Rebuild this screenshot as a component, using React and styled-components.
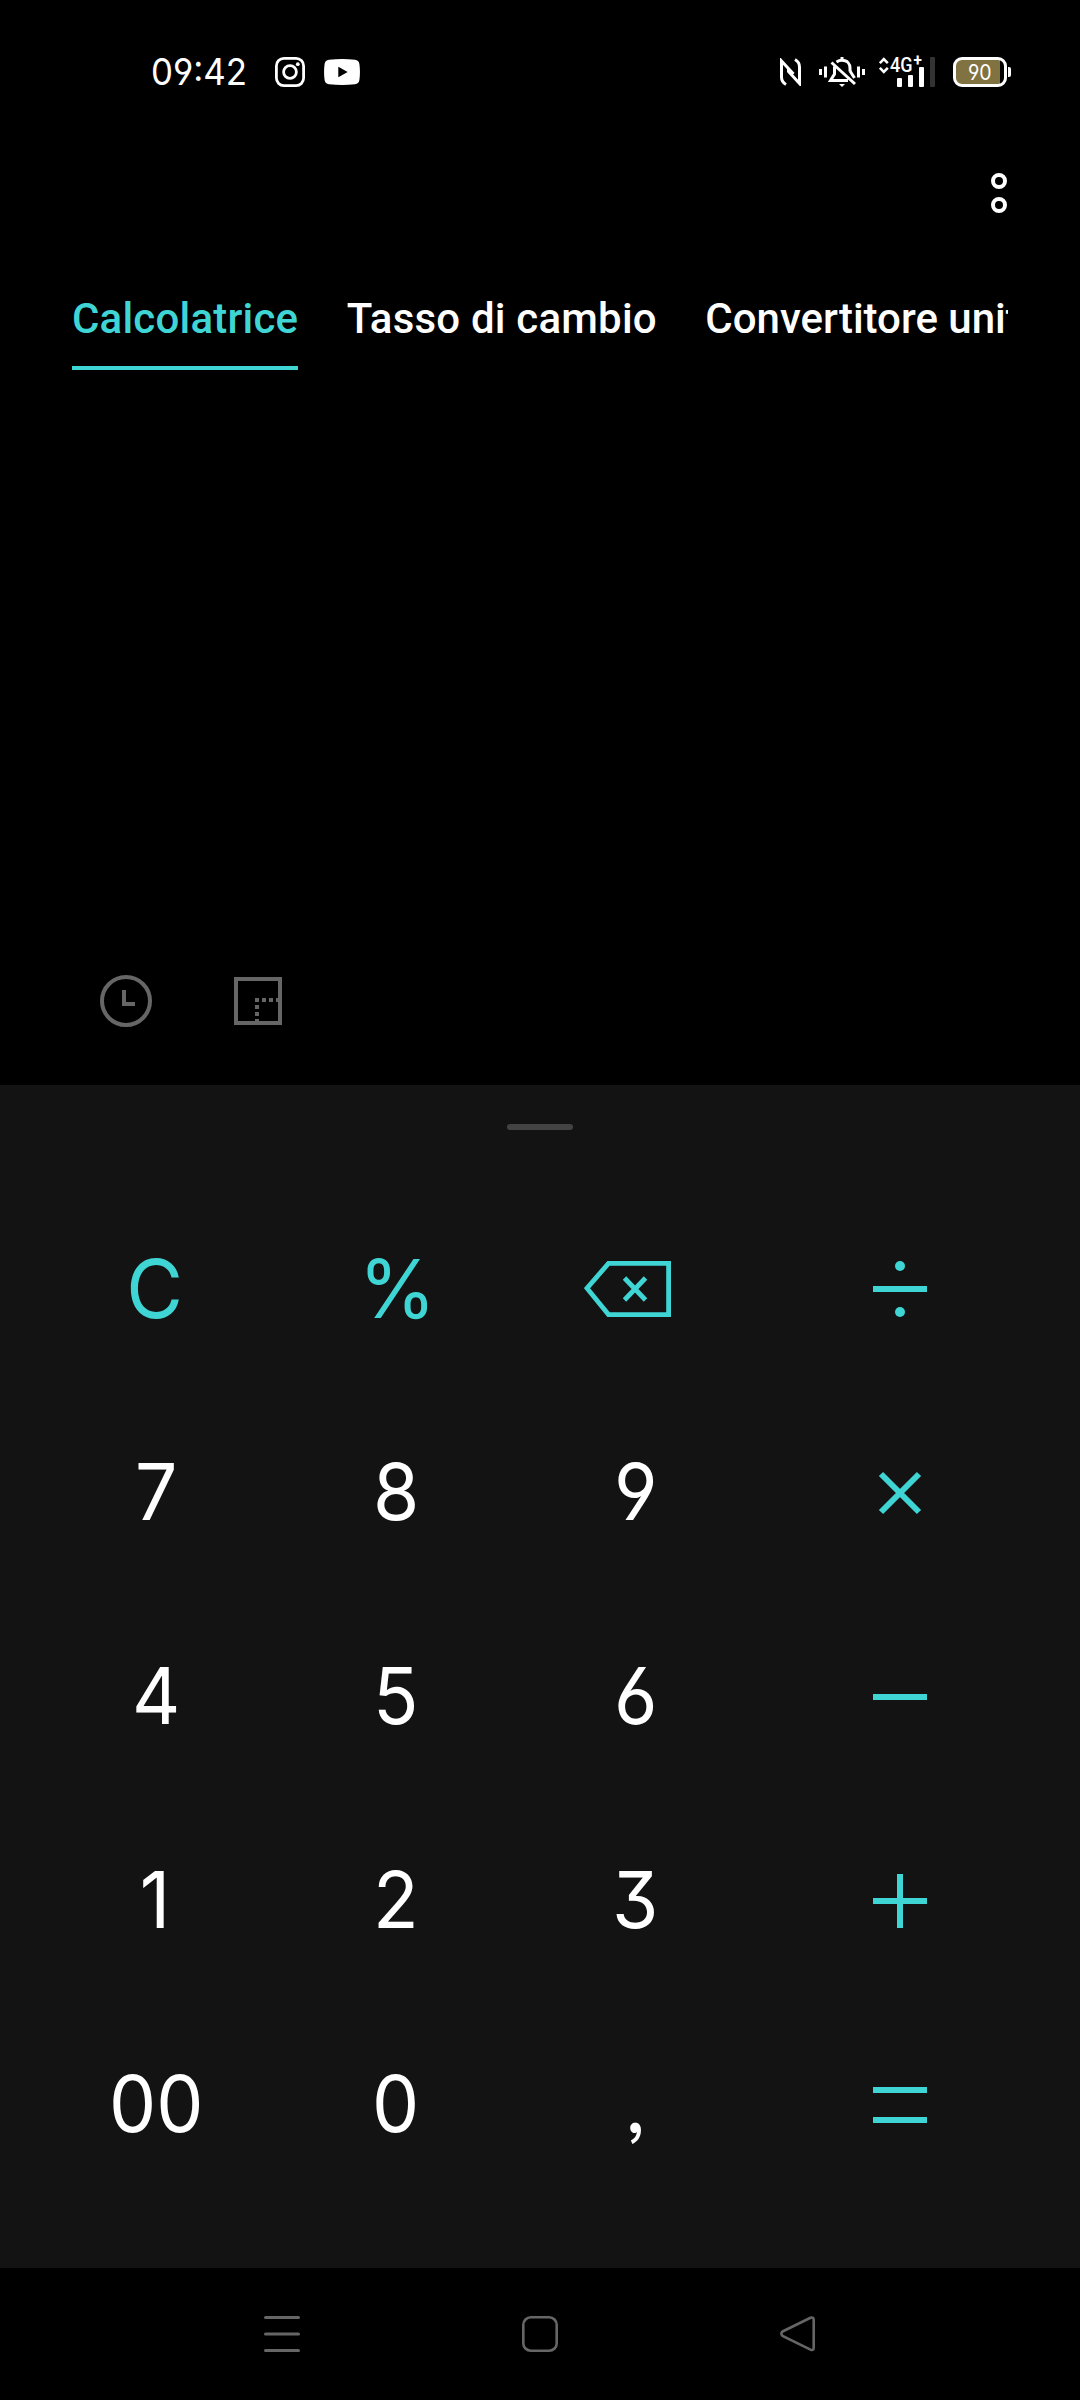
import React from "react";
import styled, { createGlobalStyle } from "styled-components";

const ACCENT = "#40d5d5";

const GlobalStyle = createGlobalStyle`
  * { box-sizing: border-box; }
  html, body { margin: 0; padding: 0; background: #000; }
  svg { display: block; flex: none; }
`;

const Screen = styled.div`
  width: 1080px;
  height: 2400px;
  display: flex;
  flex-direction: column;
  overflow: hidden;
  background: #000;
  color: #fff;
  font-family: Roboto, "Liberation Sans", sans-serif;
`;

const StatusBar = styled.header`
  height: 144px;
  flex: none;
  display: flex;
  justify-content: space-between;
  align-items: center;
  padding: 0 69px 0 151px;
`;

const StatusGroup = styled.div`
  display: flex;
  align-items: center;
`;

const Clock = styled.div`
  width: 124px;
  font: 390 36.5px/44px Inter, sans-serif;
  font-feature-settings: "cv03", "cv04";
  white-space: nowrap;
  span {
    display: inline-block;
    transform: scaleX(0.955);
    transform-origin: left;
  }
`;

const IconSlot = styled.div`
  margin-left: ${(p) => p.$gap}px;
`;

const Network = styled.div`
  display: grid;
  grid-template-columns: 11px 45px;
  width: 56px;
  height: 30px;
  margin-left: 14px;
`;

const Signal = styled.div`
  display: grid;
  > * { grid-area: 1 / 1; }
`;

const SignalLabel = styled.span`
  display: flex;
  align-items: flex-start;
  font: 500 20px/16px Roboto, sans-serif;
  transform: scaleX(0.9);
  transform-origin: left;
  white-space: nowrap;
`;

const Plus = styled.span`
  font-size: 17px;
  line-height: 7px;
  font-weight: 700;
  margin-left: 1px;
`;

const Battery = styled.div`
  display: flex;
  align-items: center;
  margin-left: 18px;
`;

const BatteryBody = styled.div`
  width: 54px;
  height: 30px;
  border: 3px solid #fff;
  border-radius: 9px;
  background: linear-gradient(90deg, #817341 0 44px, #000 44px);
  font: 390 21px/25px Inter, sans-serif;
  font-feature-settings: "cv03", "cv04";
  text-align: center;
  span {
    display: inline-block;
    transform: scaleX(0.93);
  }
`;

const BatteryNub = styled.div`
  width: 3px;
  height: 10px;
  margin-left: 1px;
  border-radius: 0 2px 2px 0;
  background: #fff;
`;

const Toolbar = styled.div`
  height: 136px;
  flex: none;
  display: flex;
  justify-content: flex-end;
  padding: 29px 73px 0 0;
`;

const Tabs = styled.nav`
  display: flex;
  gap: 48.5px;
  height: 90px;
  flex: none;
  margin: 0 72px;
  overflow: hidden;
`;

const Tab = styled.div`
  flex: none;
  height: 90px;
  padding-top: 14px;
  font-size: 42px;
  font-weight: 500;
  line-height: 49px;
  letter-spacing: ${(p) => p.$tracking || 0}px;
  white-space: nowrap;
  color: ${(p) => (p.$active ? ACCENT : "#fff")};
  border-bottom: 4px solid ${(p) => (p.$active ? ACCENT : "transparent")};
`;

const Display = styled.section`
  height: 715px;
  flex: none;
  display: flex;
  align-items: flex-end;
  gap: 82px;
  padding: 0 0 58px 100px;
`;

const Keypad = styled.main`
  height: 1183px;
  flex: none;
  background: #131313;
  display: flex;
  flex-direction: column;
`;

const Handle = styled.div`
  width: 66px;
  height: 6px;
  margin: 39px auto 57px;
  border-radius: 3px;
  background: #434343;
`;

const Keys = styled.div`
  display: grid;
  grid-template-columns: 240px 240px 240px 290px;
  grid-auto-rows: 204px;
  padding-left: 35px;
`;

const Key = styled.button`
  border: 0;
  padding: 0;
  background: none;
  display: flex;
  align-items: center;
  justify-content: center;
  color: ${(p) => (p.$accent ? ACCENT : "#fff")};
`;

const Glyph = styled.span`
  display: block;
  font-family: Inter, sans-serif;
  font-weight: 375;
  font-size: ${(p) => p.$size || 78}px;
  line-height: 96px;
  font-feature-settings: "ss03", "cv03", "cv04", "cv09";
  transform: translate(${(p) => (p.$dx === undefined ? 1 : p.$dx)}px, ${(p) => (p.$dy === undefined ? -1.5 : p.$dy)}px) scaleX(${(p) => p.$sx || 0.96});
`;

const NavBar = styled.footer`
  flex: 1;
  display: flex;
  justify-content: space-between;
  padding: 48px 264px 0;
`;

const InstagramIcon = () => (
  <svg width="30" height="30" viewBox="0 0 30 30" fill="none" stroke="#fff" strokeWidth="2.8">
    <rect x="1.4" y="1.4" width="27.2" height="27.2" rx="7.5" />
    <circle cx="15" cy="15" r="6.4" />
    <circle cx="22.8" cy="7.2" r="1.9" fill="#fff" stroke="none" />
  </svg>
);

const YoutubeIcon = () => (
  <svg width="36" height="26" viewBox="0 0 36 26">
    <path fill="#fff" fillRule="evenodd" d="M5 .8Q18-.6 31 .8 34.800 1.200 35.400 5 36.500 13 35.400 21 34.800 24.800 31 25.200 18 26.600 5 25.200 1.200 24.800.6 21-.5 13 .6 5 1.200 1.200 5 .8ZM14.300 7.800V18.200L23.700 13Z" />
  </svg>
);

const NfcIcon = () => (
  <svg width="21" height="28" viewBox="0 0 21 28" fill="none" stroke="#fff" strokeWidth="3">
    <path d="M6 26.500Q1.500 24 1.500 19V3L13.500 16" />
    <path d="M15 1.500Q19.500 4 19.500 9V25.500L8.500 13.500V11" />
  </svg>
);

const BellIcon = () => (
  <svg width="46" height="30" viewBox="0 0 46 30" fill="none" stroke="#fff" strokeWidth="3">
    <path d="M1.500 12v6M6.500 9.500v11M39.500 9.500v11M44.500 12v6" />
    <path d="M17.500 5Q20 3.300 23 3.300C28.500 3.300 31 7 31 11V14.500M15.500 9.500V17L11.500 23.500H29M12.500 5.500L36 27" />
    <path d="M23 0V4" />
    <path d="M20 27H26L23 30Z" fill="#fff" stroke="none" />
    <path d="M31 14L35.500 21" />
  </svg>
);

const DataArrows = () => (
  <svg width="10" height="17" viewBox="0 0 10 17" fill="none" stroke="#fff" strokeWidth="2.600">
    <path d="M.8 6.200 4.800 2.200 8.800 6.200M.8 10.800 4.800 14.800 8.800 10.800" />
  </svg>
);

const SignalBars = () => (
  <svg width="46" height="30" viewBox="0 0 46 30" fill="#fff">
    <rect x="7" y="21" width="5" height="9" rx="1" />
    <rect x="18" y="18" width="5" height="12" rx="1" />
    <rect x="29" y="10" width="5" height="20" rx="1" />
    <rect x="40" y="0" width="5" height="30" rx="1" fill="#333" />
  </svg>
);

const MoreIcon = () => (
  <svg width="16" height="48" viewBox="0 0 16 48" fill="none" stroke="#fff" strokeWidth="4">
    <circle cx="8" cy="8" r="6" />
    <circle cx="8" cy="32" r="6" />
  </svg>
);

const HistoryIcon = () => (
  <svg width="52" height="52" viewBox="0 0 52 52" fill="none" stroke="#666" strokeWidth="4">
    <circle cx="26" cy="26" r="24" />
    <path d="M24 15V29H35" />
  </svg>
);

const ResizeIcon = () => (
  <svg width="48" height="52" viewBox="0 0 48 52" fill="none" stroke="#666" strokeWidth="4">
    <rect x="2" y="4" width="44" height="44" />
    <path d="M21 25H46" strokeDasharray="4 3" />
    <path d="M23 30V48" strokeDasharray="4 3" />
  </svg>
);

const BackspaceIcon = () => (
  <svg width="88" height="56" viewBox="0 0 88 56" fill="none" stroke="currentColor" strokeWidth="4.800" transform="translate(-7 0)">
    <path d="M24.500 2.400H84.600V53.600H24.500L3 27.200Z" />
    <path d="M40.500 17 61.500 39M61.500 17 40.500 39" />
  </svg>
);

const OPERATORS = {
  divide: (
    <>
      <path d="M0 30H54" />
      <circle cx="27" cy="7" r="5" fill="currentColor" stroke="none" />
      <circle cx="27" cy="53" r="5" fill="currentColor" stroke="none" />
    </>
  ),
  multiply: <path d="M8 11 46 49M46 11 8 49" />,
  minus: <path d="M0 30H54" />,
  plus: <path d="M0 30H54M27 3V57" />,
  equals: <path d="M0 15H54M0 45H54" />,
};

const Operator = ({ name }) => (
  <svg width="54" height="60" viewBox="0 0 54 60" fill="none" stroke="currentColor" strokeWidth="6">
    {OPERATORS[name]}
  </svg>
);

const KEYS = [
  { label: "C", accent: true, size: 81, sx: 0.96, dx: 0, dy: 0 },
  { label: "%", accent: true, size: 81, sx: 0.97, dx: 2.5, dy: 0 },
  { icon: <BackspaceIcon />, accent: true },
  { op: "divide" },
  { label: "7" }, { label: "8" }, { label: "9" }, { op: "multiply" },
  { label: "4" }, { label: "5" }, { label: "6" }, { op: "minus" },
  { label: "1", dx: 0 }, { label: "2" }, { label: "3", dx: 0 }, { op: "plus" },
  { label: "00" }, { label: "0" }, { label: ",", dx: 0 }, { op: "equals" },
];

export default function App() {
  return (
    <Screen>
      <GlobalStyle />
      <StatusBar>
        <StatusGroup>
          <Clock><span>09:42</span></Clock>
          <InstagramIcon />
          <IconSlot $gap={19}><YoutubeIcon /></IconSlot>
        </StatusGroup>
        <StatusGroup>
          <NfcIcon />
          <IconSlot $gap={18}><BellIcon /></IconSlot>
          <Network>
            <DataArrows />
            <Signal>
              <SignalBars />
              <SignalLabel>4G<Plus>+</Plus></SignalLabel>
            </Signal>
          </Network>
          <Battery>
            <BatteryBody><span>90</span></BatteryBody>
            <BatteryNub />
          </Battery>
        </StatusGroup>
      </StatusBar>
      <Toolbar><MoreIcon /></Toolbar>
      <Tabs>
        <Tab $active $tracking={0.2}>Calcolatrice</Tab>
        <Tab $tracking={0.2}>Tasso di cambio</Tab>
        <Tab>Convertitore unità</Tab>
      </Tabs>
      <Display>
        <HistoryIcon />
        <ResizeIcon />
      </Display>
      <Keypad>
        <Handle />
        <Keys>
          {KEYS.map((k) => (
            <Key key={k.label || k.op || "del"} $accent={k.accent || k.op}>
              {k.op && <Operator name={k.op} />}
              {k.icon}
              {k.label && (
                <Glyph $size={k.size} $sx={k.sx} $dx={k.dx} $dy={k.dy}>{k.label}</Glyph>
              )}
            </Key>
          ))}
        </Keys>
      </Keypad>
      <NavBar>
        <svg width="36" height="36" viewBox="0 0 36 36" stroke="#666" strokeWidth="3" strokeLinecap="round">
          <path d="M1.500 1.500H34.500M1.500 18H34.500M1.500 34.500H34.500" />
        </svg>
        <svg width="36" height="36" viewBox="0 0 36 36" fill="none" stroke="#666" strokeWidth="2.600">
          <rect x="1.300" y="1.300" width="33.400" height="33.400" rx="7.500" />
        </svg>
        <svg width="36" height="36" viewBox="0 0 36 36" fill="none" stroke="#666" strokeWidth="2.600">
          <path d="M2.500 15.500 30.500 1.800Q33.700.6 33.700 4V31.500Q33.700 35 30.500 33.600L2.500 19.800Q.2 17.700 2.500 15.500Z" />
        </svg>
      </NavBar>
    </Screen>
  );
}
